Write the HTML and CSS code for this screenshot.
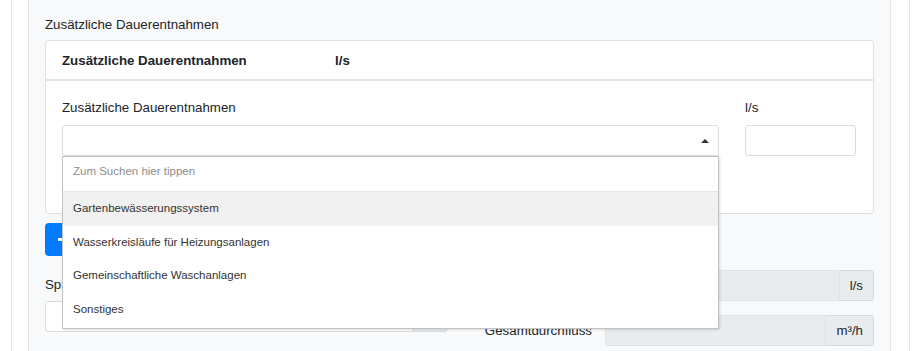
FILE: index.html
```html
<!DOCTYPE html>
<html lang="de">
<head>
    <meta charset="UTF-8">
    <meta name="viewport" content="width=device-width, initial-scale=1.0">
    <title>Zusätzliche Dauerentnahmen</title>
    <link rel="stylesheet" href="styles.css">
</head>
<body>
    <div class="frame">
        <div class="panel">
            <div class="section-title">Zusätzliche Dauerentnahmen</div>

            <div class="card">
                <div class="card-header">
                    <span class="col-name">Zusätzliche Dauerentnahmen</span>
                    <span>l/s</span>
                </div>
                <div class="card-body">
                    <div class="entry-row">
                        <div class="field">
                            <label>Zusätzliche Dauerentnahmen</label>
                            <div class="select-wrap">
                                <div class="select"><span class="caret"></span></div>
                                <div class="dropdown">
                                    <div class="search">Zum Suchen hier tippen</div>
                                    <ul class="options">
                                        <li class="active">Gartenbewässerungssystem</li>
                                        <li>Wasserkreisläufe für Heizungsanlagen</li>
                                        <li>Gemeinschaftliche Waschanlagen</li>
                                        <li>Sonstiges</li>
                                    </ul>
                                </div>
                            </div>
                        </div>
                        <div class="field">
                            <label>l/s</label>
                            <div class="input"></div>
                        </div>
                    </div>
                </div>
            </div>

            <button class="btn-add" aria-label="Hinzufügen">
                <svg width="13" height="13" viewBox="0 0 13 13"><path d="M6.5 1v11M1 6.5h11" stroke="#fff" stroke-width="3"/></svg>
            </button>

            <div class="totals">
                <div class="totals-left">
                    <label>Spitzendurchfluss</label>
                    <div class="input-group">
                        <div class="input"></div>
                        <span class="addon">l/s</span>
                    </div>
                </div>
                <div class="totals-right">
                    <div class="form-row">
                        <label>Spitzendurchfluss</label>
                        <div class="input-group">
                            <div class="input disabled"></div>
                            <span class="addon">l/s</span>
                        </div>
                    </div>
                    <div class="form-row">
                        <label>Gesamtdurchfluss</label>
                        <div class="input-group">
                            <div class="input disabled"></div>
                            <span class="addon">m³/h</span>
                        </div>
                    </div>
                </div>
            </div>
        </div>
    </div>
</body>
</html>
```

FILE: styles.css
```css
body, html {
    margin: 0;
    padding: 0;
    height: 100%;
    overflow: hidden;
    background: #fff;
    font-family: "Liberation Sans", Arial, sans-serif;
    font-size: 13.3px;
    line-height: 20px;
    color: #212529;
}

.frame {
    margin-left: 11px;
    width: 899px;
    height: 100%;
    border-left: 1px solid #e6e6e6;
    border-right: 1px solid #e6e6e6;
    padding: 0 18px 0 16px;
    box-sizing: border-box;
}

.panel {
    height: 100%;
    background: #f8f9fa;
    border: 1px solid #e3e5e8;
    border-top: none;
    padding: 15px 16px 0;
}

.section-title {
    margin-bottom: 5px;
}

.card {
    background: #fff;
    border: 1px solid #e0e0e0;
    border-radius: 4px;
}

.card-header {
    display: grid;
    grid-template-columns: 273px 1fr;
    padding: 10px 16px 8px;
    border-bottom: 2px solid #e4e4e4;
    font-weight: bold;
}

.card-body {
    padding: 17px 16px 57px;
}

.entry-row {
    display: grid;
    grid-template-columns: 657px 111px;
    gap: 26px;
}

.field label {
    display: block;
    margin-bottom: 7px;
}

.select-wrap {
    position: relative;
}

.select, .input {
    height: 31px;
    box-sizing: border-box;
    border: 1px solid #dadde0;
    border-radius: 3px;
    background: #fff;
}

.select {
    display: flex;
    align-items: center;
    justify-content: flex-end;
    padding-right: 9px;
}

.caret {
    width: 0;
    height: 0;
    border-left: 4px solid transparent;
    border-right: 4px solid transparent;
    border-bottom: 4px solid #333;
}

.dropdown {
    position: absolute;
    top: 31px;
    left: 0;
    right: 0;
    z-index: 10;
    background: #fff;
    border: 1px solid #c2c2c2;
    box-shadow: 1px 1px 2px rgba(0, 0, 0, 0.12);
    font-size: 11.5px;
    padding-bottom: 1.5px;
}

.search {
    padding: 4px 10px 10px;
    color: #8d8d8d;
    border-bottom: 1px solid #e6e6e6;
}

.options {
    list-style: none;
    margin: 0;
    padding: 0;
}

.options li {
    height: 33.7px;
    line-height: 33.7px;
    padding: 0 10px;
    color: #333;
}

.options li.active {
    background: #f1f1f1;
}

.btn-add {
    display: flex;
    align-items: center;
    margin-top: 9px;
    width: 100px;
    height: 33px;
    padding: 0 12px;
    border: none;
    border-radius: 4px;
    background: #007bff;
}

.totals {
    display: flex;
    gap: 12px;
    margin-top: 14px;
}

.totals-left {
    width: 402px;
    padding-top: 5px;
}

.totals-left label {
    display: block;
    margin-bottom: 6px;
}

.totals-right {
    flex: 1;
    display: flex;
    flex-direction: column;
    gap: 14px;
}

.form-row {
    display: grid;
    grid-template-columns: 133px 1fr;
    gap: 13px;
    align-items: center;
}

.form-row label {
    text-align: right;
    line-height: 31px;
}

.input-group {
    display: flex;
    height: 31px;
}

.input-group .input {
    flex: 1;
    border-radius: 3px 0 0 3px;
}

.input.disabled {
    background: #e9ecef;
    border-color: #dfe2e6;
}

.addon {
    display: flex;
    align-items: center;
    padding: 0 10px;
    background: #e9ecef;
    border: 1px solid #d6dadf;
    border-left: none;
    border-radius: 0 3px 3px 0;
}
```
